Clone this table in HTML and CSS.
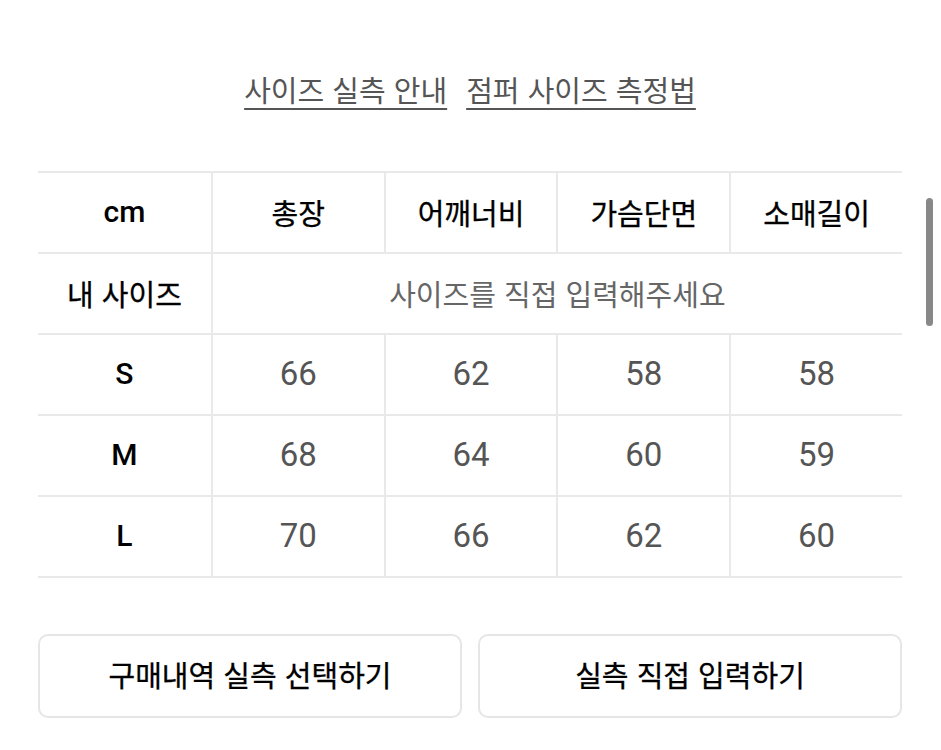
FILE: index.html
```html
<!DOCTYPE html>
<html lang="ko">
<head>
<meta charset="utf-8">
<title>사이즈 실측 안내</title>
<link rel="stylesheet" href="styles.css">
</head>
<body>
<div class="page">
  <nav class="guide-links">
    <a class="guide-link" href="#">사이즈 실측 안내</a>
    <a class="guide-link" href="#">점퍼 사이즈 측정법</a>
  </nav>

  <div class="size-table">
    <div class="cell head first"><span class="latin">cm</span></div>
    <div class="cell head">총장</div>
    <div class="cell head">어깨너비</div>
    <div class="cell head">가슴단면</div>
    <div class="cell head">소매길이</div>

    <div class="cell head first">내 사이즈</div>
    <div class="cell placeholder span4">사이즈를 직접 입력해주세요</div>

    <div class="cell head first"><span class="latin">S</span></div>
    <div class="cell num">66</div>
    <div class="cell num">62</div>
    <div class="cell num">58</div>
    <div class="cell num">58</div>

    <div class="cell head first"><span class="latin">M</span></div>
    <div class="cell num">68</div>
    <div class="cell num">64</div>
    <div class="cell num">60</div>
    <div class="cell num">59</div>

    <div class="cell head first"><span class="latin">L</span></div>
    <div class="cell num">70</div>
    <div class="cell num">66</div>
    <div class="cell num">62</div>
    <div class="cell num">60</div>
  </div>

  <div class="actions">
    <button class="action-btn" type="button">구매내역 실측 선택하기</button>
    <button class="action-btn" type="button">실측 직접 입력하기</button>
  </div>
</div>
<div class="scroll-indicator"></div>
</body>
</html>
```

FILE: styles.css
```css
html, body {
  margin: 0;
  padding: 0;
  background: #ffffff;
}

body {
  font-family: "Noto Sans CJK KR", "Noto Sans", sans-serif;
  color: #111111;
  width: 941px;
  height: 750px;
  overflow: hidden;
  position: relative;
}

.page {
  padding: 70px 39px 0 38px;
}

.guide-links {
  display: flex;
  justify-content: center;
  gap: 19px;
  height: 38px;
}

.guide-link {
  font-size: 29px;
  line-height: 38px;
  color: #555555;
  text-decoration: underline;
  text-decoration-thickness: 2px;
  text-underline-offset: 6px;
}

.size-table {
  margin-top: 63px;
  display: grid;
  grid-template-columns: repeat(5, 1fr);
  border-top: 2px solid #e9e9e9;
}

.cell {
  box-sizing: border-box;
  height: 81px;
  display: flex;
  align-items: center;
  justify-content: center;
  border-bottom: 2px solid #e9e9e9;
  border-left: 2px solid #e9e9e9;
  font-size: 29px;
  padding-bottom: 2px;
}

.cell.first {
  border-left: none;
}

.head {
  font-weight: 400;
  color: #000000;
  -webkit-text-stroke: 0.3px #000000;
}

.latin {
  font-family: Roboto, "Liberation Sans", sans-serif;
  font-size: 30px;
  font-weight: 500;
  -webkit-text-stroke: 0;
}

.placeholder {
  color: #666666;
  font-weight: 400;
}

.span4 {
  grid-column: span 4;
}

.num {
  font-family: Roboto, "Liberation Sans", sans-serif;
  font-size: 33px;
  color: #555555;
}

.actions {
  margin-top: 56px;
  display: flex;
  gap: 16px;
}

.action-btn {
  flex: 1;
  height: 84px;
  background: #ffffff;
  border: 2px solid #e6e6e6;
  border-radius: 10px;
  font-family: "Noto Sans CJK KR", "Noto Sans", sans-serif;
  font-size: 29px;
  font-weight: 400;
  color: #000000;
  -webkit-text-stroke: 0.3px #000000;
  padding: 0 0 4px 0;
}

.scroll-indicator {
  position: absolute;
  left: 926px;
  top: 198px;
  width: 7px;
  height: 128px;
  border-radius: 4px;
  background: #888888;
}
```
